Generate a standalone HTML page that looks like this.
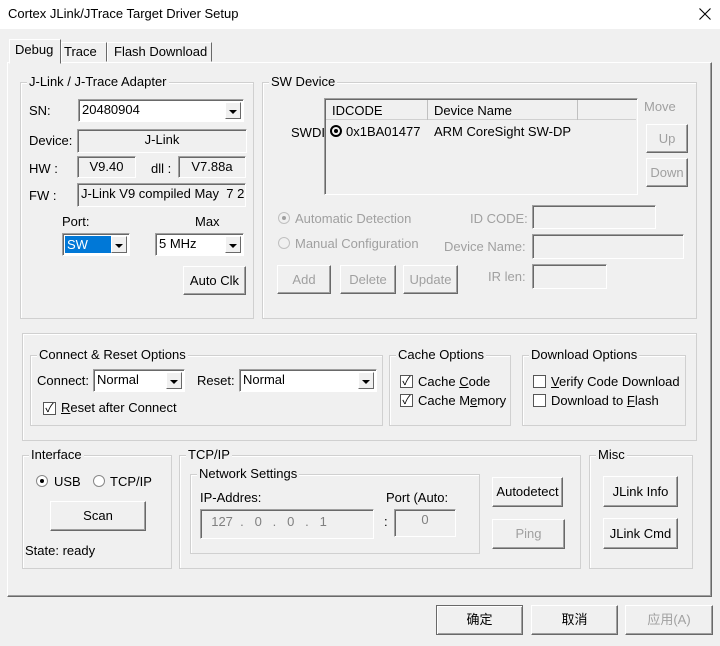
<!DOCTYPE html>
<html><head><meta charset="utf-8"><style>
*{box-sizing:border-box;margin:0;padding:0}
body{width:720px;height:646px;background:#f0f0f0;font-family:"Liberation Sans","Noto Sans CJK SC",sans-serif;font-size:13px;color:#000;position:relative;overflow:hidden}
.a{position:absolute;white-space:nowrap}
.g{position:absolute;border:1px solid #d0d0d0;box-shadow:inset 1px 1px 0 #fff}
.gl{position:absolute;top:-9px;left:6px;background:#f0f0f0;padding:0 2px;line-height:16px;white-space:nowrap}
.s{position:absolute;border:1px solid;border-color:#a0a0a0 #fff #fff #a0a0a0;box-shadow:inset 1px 1px 0 #696969;background:#f0f0f0;padding:2px 3px;line-height:16px;white-space:nowrap;overflow:hidden}
.w{background:#fff}
.b{position:absolute;border:1px solid;border-color:#fff #696969 #696969 #fff;box-shadow:inset -1px -1px 0 #a0a0a0;text-align:center;background:#f0f0f0;white-space:nowrap}
.d{color:#a0a0a0}
.dd{position:absolute;right:2px;top:2px;bottom:2px;width:16px;background:#f0f0f0;border:1px solid;border-color:#fff #696969 #696969 #fff}
.dd:after{content:"";position:absolute;left:3px;top:7px;border:4px solid transparent;border-top:4px solid #000;border-bottom:0}
.cb{position:absolute;width:13px;height:13px;border:1px solid #555;background:#fff;font-size:12px;line-height:11px;text-align:center}
.r{position:absolute;width:12px;height:12px;border-radius:50%;border:1px solid #888;background:#fff}
.r.on:after{content:"";position:absolute;left:3px;top:3px;width:4px;height:4px;border-radius:50%;background:#000}
.r.dis{border-color:#c0c0c0;background:#f0f0f0}
.r.dis.on:after{background:#a0a0a0}
</style></head><body>
<div class="a" style="left:0;top:0;width:720px;height:29px;background:#fff"></div>
<div class="a" style="left:8px;top:6px;font-size:13px">Cortex JLink/JTrace Target Driver Setup</div>
<svg class="a" style="left:699px;top:8px" width="12" height="12"><path d="M0.5 0.5L11.5 11.5M11.5 0.5L0.5 11.5" stroke="#000" stroke-width="1.1"/></svg>

<!-- panel -->
<div class="a" style="left:7px;top:62px;width:705px;height:535px;border:1px solid;border-color:#fff #696969 #696969 #fff;box-shadow:inset -1px -1px 0 #a0a0a0"></div>
<div class="a" style="left:61px;top:42px;width:46px;height:20px;border:1px solid;border-color:#fff #696969 transparent #fff"></div>
<div class="a" style="left:64px;top:44px">Trace</div>
<div class="a" style="left:107px;top:42px;width:105px;height:20px;border:1px solid;border-color:#fff #696969 transparent #fff"></div>
<div class="a" style="left:114px;top:44px">Flash Download</div>
<div class="a" style="left:9px;top:39px;width:52px;height:25px;border:1px solid;border-color:#fff #696969 transparent #fff;background:#f0f0f0"></div>
<div class="a" style="left:15px;top:42px">Debug</div>

<!-- J-Link adapter -->
<div class="g" style="left:20px;top:82px;width:234px;height:237px"><span class="gl">J-Link / J-Trace Adapter</span></div>
<div class="a" style="left:29px;top:103px">SN:</div>
<div class="s w" style="left:78px;top:99px;width:166px;height:23px">20480904<span class="dd"></span></div>
<div class="a" style="left:29px;top:133px">Device:</div>
<div class="s" style="left:77px;top:129px;width:170px;height:24px;text-align:center">J-Link</div>
<div class="a" style="left:29px;top:161px">HW :</div>
<div class="s" style="left:77px;top:156px;width:59px;height:22px;text-align:center">V9.40</div>
<div class="a" style="left:151px;top:161px">dll :</div>
<div class="s" style="left:178px;top:156px;width:68px;height:22px;text-align:center">V7.88a</div>
<div class="a" style="left:29px;top:188px">FW :</div>
<div class="s" style="left:77px;top:183px;width:169px;height:24px">J-Link V9 compiled May&nbsp; 7 2</div>
<div class="a" style="left:62px;top:214px">Port:</div>
<div class="a" style="left:195px;top:214px">Max</div>
<div class="s w" style="left:62px;top:233px;width:68px;height:23px;padding:0"><span class="a" style="left:2px;top:2px;width:46px;height:17px;background:#0078d7;color:#fff;padding-left:2px;line-height:17px">SW</span><span class="dd"></span></div>
<div class="s w" style="left:155px;top:233px;width:89px;height:23px">5 MHz<span class="dd"></span></div>
<div class="b" style="left:183px;top:266px;width:63px;height:29px;line-height:27px">Auto Clk</div>

<!-- SW Device -->
<div class="g" style="left:262px;top:82px;width:435px;height:237px"><span class="gl">SW Device</span></div>
<div class="a" style="left:291px;top:125px">SWDI</div>
<div class="s" style="left:324px;top:98px;width:314px;height:97px;padding:0"></div>
<div class="a" style="left:326px;top:100px;width:310px;height:20px;border-bottom:1px solid #d0d0d0;background:#f0f0f0"></div>
<div class="a" style="left:427px;top:100px;height:20px;border-left:1px solid #c0c0c0"></div>
<div class="a" style="left:577px;top:100px;height:20px;border-left:1px solid #c0c0c0"></div>
<div class="a" style="left:332px;top:103px">IDCODE</div>
<div class="a" style="left:434px;top:103px">Device Name</div>
<div class="a" style="left:330px;top:125px;width:12px;height:12px;border:2px solid #000;border-radius:50%"><span class="a" style="left:2px;top:2px;width:4px;height:4px;background:#000;border-radius:50%"></span></div>
<div class="a" style="left:346px;top:124px">0x1BA01477</div>
<div class="a" style="left:434px;top:124px">ARM CoreSight SW-DP</div>
<div class="a d" style="left:644px;top:99px">Move</div>
<div class="b d" style="left:646px;top:124px;width:42px;height:29px;line-height:27px">Up</div>
<div class="b d" style="left:646px;top:158px;width:42px;height:29px;line-height:27px">Down</div>
<div class="r dis on" style="left:278px;top:212px"></div>
<div class="a d" style="left:295px;top:211px">Automatic Detection</div>
<div class="r dis" style="left:278px;top:237px"></div>
<div class="a d" style="left:295px;top:236px">Manual Configuration</div>
<div class="a d" style="left:470px;top:211px">ID CODE:</div>
<div class="a d" style="left:444px;top:239px">Device Name:</div>
<div class="a d" style="left:488px;top:269px">IR len:</div>
<div class="s" style="left:532px;top:205px;width:124px;height:24px"></div>
<div class="s" style="left:532px;top:234px;width:152px;height:25px"></div>
<div class="s" style="left:532px;top:264px;width:75px;height:25px"></div>
<div class="b d" style="left:277px;top:265px;width:54px;height:29px;line-height:27px">Add</div>
<div class="b d" style="left:340px;top:265px;width:56px;height:29px;line-height:27px">Delete</div>
<div class="b d" style="left:403px;top:265px;width:55px;height:29px;line-height:27px">Update</div>

<!-- Connect frame -->
<div class="g" style="left:22px;top:333px;width:675px;height:108px"></div>
<div class="g" style="left:30px;top:355px;width:353px;height:71px"><span class="gl">Connect &amp; Reset Options</span></div>
<div class="a" style="left:37px;top:373px">Connect:</div>
<div class="s w" style="left:93px;top:369px;width:92px;height:23px">Normal<span class="dd"></span></div>
<div class="a" style="left:197px;top:373px">Reset:</div>
<div class="s w" style="left:239px;top:369px;width:138px;height:23px">Normal<span class="dd"></span></div>
<div class="cb" style="left:43px;top:402px">✓</div>
<div class="a" style="left:61px;top:400px"><u>R</u>eset after Connect</div>
<div class="g" style="left:389px;top:355px;width:122px;height:71px"><span class="gl">Cache Options</span></div>
<div class="cb" style="left:400px;top:375px">✓</div>
<div class="a" style="left:418px;top:374px">Cache <u>C</u>ode</div>
<div class="cb" style="left:400px;top:394px">✓</div>
<div class="a" style="left:418px;top:393px">Cache M<u>e</u>mory</div>
<div class="g" style="left:522px;top:355px;width:164px;height:71px"><span class="gl">Download Options</span></div>
<div class="cb" style="left:533px;top:375px"></div>
<div class="a" style="left:551px;top:374px"><u>V</u>erify Code Download</div>
<div class="cb" style="left:533px;top:394px"></div>
<div class="a" style="left:551px;top:393px">Download to <u>F</u>lash</div>

<!-- Interface -->
<div class="g" style="left:22px;top:455px;width:150px;height:114px"><span class="gl">Interface</span></div>
<div class="r on" style="left:36px;top:475px"></div>
<div class="a" style="left:54px;top:474px">USB</div>
<div class="r" style="left:93px;top:475px"></div>
<div class="a" style="left:110px;top:474px">TCP/IP</div>
<div class="b" style="left:50px;top:501px;width:96px;height:30px;line-height:28px">Scan</div>
<div class="a" style="left:25px;top:543px">State: ready</div>

<!-- TCP/IP -->
<div class="g" style="left:179px;top:455px;width:402px;height:114px"><span class="gl">TCP/IP</span></div>
<div class="g" style="left:190px;top:474px;width:290px;height:80px"><span class="gl">Network Settings</span></div>
<div class="a" style="left:200px;top:490px">IP-Addres:</div>
<div class="a" style="left:386px;top:490px">Port (Auto:</div>
<div class="s" style="left:200px;top:509px;width:174px;height:30px;color:#808080;line-height:20px">&nbsp; 127&nbsp; .&nbsp; &nbsp;0&nbsp; &nbsp;.&nbsp; &nbsp;0&nbsp; &nbsp;.&nbsp; &nbsp;1</div>
<div class="a" style="left:384px;top:514px">:</div>
<div class="s" style="left:394px;top:509px;width:62px;height:28px;color:#808080;text-align:center">0</div>
<div class="b" style="left:492px;top:477px;width:71px;height:30px;line-height:28px">Autodetect</div>
<div class="b d" style="left:492px;top:519px;width:73px;height:30px;line-height:28px">Ping</div>

<!-- Misc -->
<div class="g" style="left:589px;top:455px;width:104px;height:114px"><span class="gl">Misc</span></div>
<div class="b" style="left:603px;top:476px;width:75px;height:31px;line-height:29px">JLink Info</div>
<div class="b" style="left:603px;top:518px;width:75px;height:31px;line-height:29px">JLink Cmd</div>

<!-- bottom buttons -->
<div class="b" style="left:436px;top:605px;width:87px;height:30px;line-height:28px;border-color:#696969;box-shadow:inset 1px 1px 0 #fff,inset -1px -1px 0 #a0a0a0">确定</div>
<div class="b" style="left:531px;top:605px;width:87px;height:30px;line-height:28px">取消</div>
<div class="b d" style="left:625px;top:605px;width:88px;height:30px;line-height:28px">应用(A)</div>
</body></html>
